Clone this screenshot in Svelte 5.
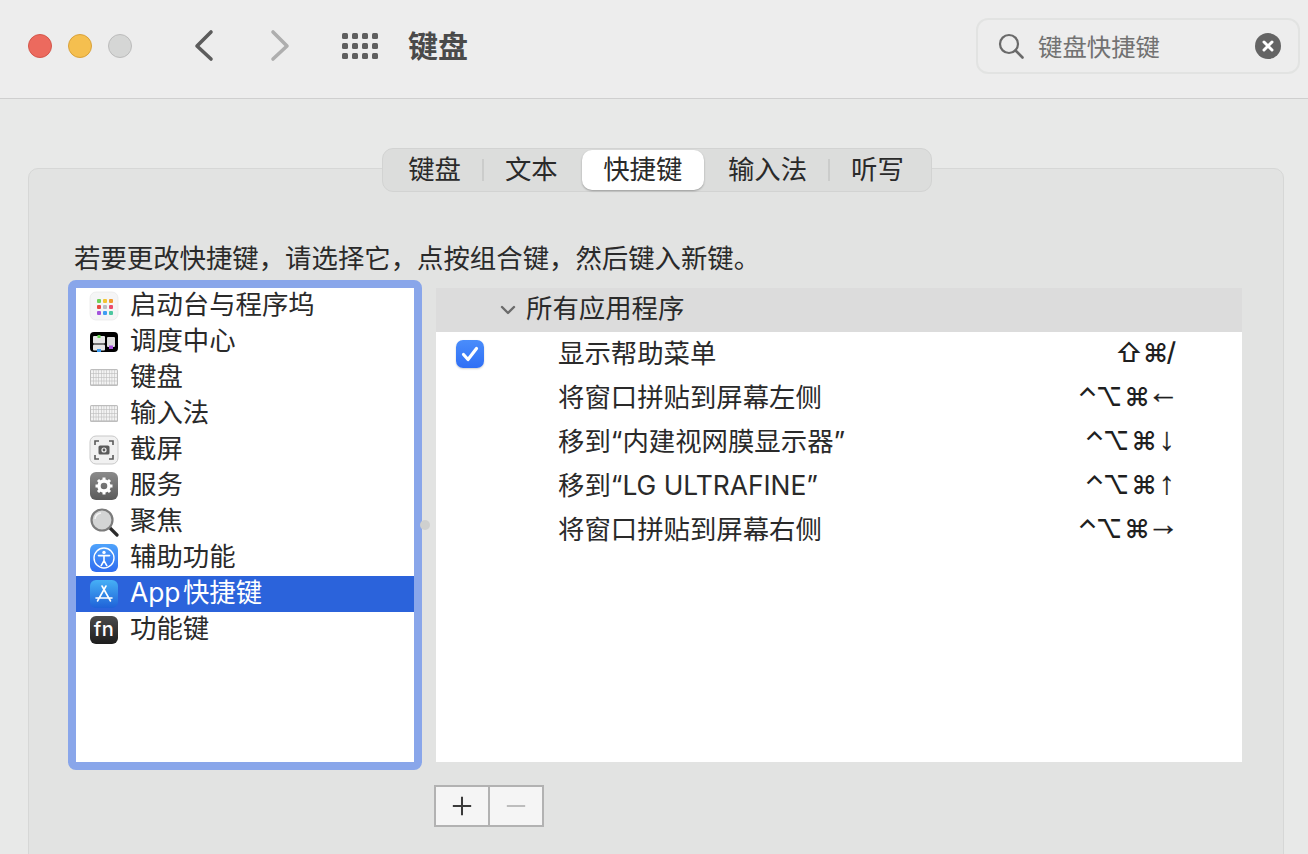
<script>
  const hint = '若要更改快捷键\uFF0C请选择它\uFF0C点按组合键\uFF0C然后键入新键\u3002';
  const tabs = [
    { label: '键盘', cls: 'first sep' },
    { label: '文本', cls: '' },
    { label: '快捷键', cls: 'active' },
    { label: '输入法', cls: 'sep' },
    { label: '听写', cls: 'last' }
  ];
  const categories = [
    { icon: 'launchpad', label: '启动台与程序坞' },
    { icon: 'mission', label: '调度中心' },
    { icon: 'keyboard', label: '键盘' },
    { icon: 'keyboard', label: '输入法' },
    { icon: 'screenshot', label: '截屏' },
    { icon: 'services', label: '服务' },
    { icon: 'spotlight', label: '聚焦' },
    { icon: 'access', label: '辅助功能' },
    { icon: 'appstore', label: 'App 快捷键', selected: true },
    { icon: 'fn', label: '功能键' }
  ];
  const shortcuts = [
    { checked: true, label: '显示帮助菜单', keys: ['⇧', '⌘', '/'] },
    { label: '将窗口拼贴到屏幕左侧', keys: ['⌃', '⌥', '⌘', '←'] },
    { label: '移到“内建视网膜显示器”', keys: ['⌃', '⌥', '⌘', '↓'] },
    { label: '移到“LG ULTRAFINE”', keys: ['⌃', '⌥', '⌘', '↑'] },
    { label: '将窗口拼贴到屏幕右侧', keys: ['⌃', '⌥', '⌘', '→'] }
  ];
  const launchColors = ['#6fd05a', '#f3c431', '#ef9a2e', '#e8483f', '#b9bdc2', '#ec4a6c', '#a455dc', '#3e9df2', '#4cc7a0'];
  const keyRows = [0, 1, 2, 3];
  const keyCols = [0, 1, 2, 3, 4, 5, 6, 7, 8, 9];
</script>

{#snippet icon(name)}
  <svg class="cat-icon" viewBox="0 0 30 30" aria-hidden="true">
    <defs>
      <linearGradient id="g-gray" x1="0" y1="0" x2="0" y2="1"><stop offset="0" stop-color="#8b8b8b"/><stop offset="1" stop-color="#5a5a5a"/></linearGradient>
      <linearGradient id="g-blue" x1="0" y1="0" x2="0" y2="1"><stop offset="0" stop-color="#4fa3fb"/><stop offset="1" stop-color="#2f6cf0"/></linearGradient>
      <linearGradient id="g-store" x1="0" y1="0" x2="0" y2="1"><stop offset="0" stop-color="#46b0f6"/><stop offset="1" stop-color="#1f62d8"/></linearGradient>
      <linearGradient id="g-dark" x1="0" y1="0" x2="0" y2="1"><stop offset="0" stop-color="#4b4b4b"/><stop offset="1" stop-color="#1d1d1d"/></linearGradient>
    </defs>
    {#if name === 'launchpad'}
      <rect x="1" y="1" width="28" height="28" rx="6" fill="#f5f5f6" stroke="#e4e4e4" stroke-width="0.6"/>
      {#each launchColors as c, i}
        <rect x={8 + (i % 3) * 6} y={8 + Math.floor(i / 3) * 6} width="4" height="4" rx="1" fill={c}/>
      {/each}
    {:else if name === 'mission'}
      <rect x="1" y="5" width="28" height="20" rx="4" fill="#000"/>
      <rect x="4" y="9" width="12" height="7.5" rx="1" fill="#e6e6e6"/>
      <rect x="8.5" y="8" width="3" height="3" fill="#63d24e"/>
      <rect x="18" y="10" width="8" height="10" rx="1" fill="#dcdcdc"/>
      <rect x="20" y="18.5" width="4" height="3.5" fill="#a550dc"/>
      <rect x="4" y="17.5" width="12" height="6" rx="1" fill="#e6e6e6"/>
      <rect x="8" y="22" width="4" height="3" fill="#3c9df2"/>
    {:else if name === 'keyboard'}
      <rect x="1" y="6" width="28" height="17" rx="1.5" fill="#bdbdbd"/>
      {#each keyRows as r}
        {#each keyCols as c}
          <rect x={2 + c * 2.65} y={7.2 + r * 3.7} width="2.1" height="3.1" fill="#f3f3f3"/>
        {/each}
      {/each}
    {:else if name === 'screenshot'}
      <rect x="1" y="1" width="28" height="28" rx="6" fill="#f1f1f1" stroke="#c9c9c9"/>
      <path d="M6 10V6h4M20 6h4v4M24 20v4h-4M10 24H6v-4" fill="none" stroke="#5b5b5b" stroke-width="1.6"/>
      <rect x="9.5" y="10.5" width="11" height="9" rx="1.6" fill="#5b5b5b"/>
      <circle cx="15" cy="15" r="2.6" fill="#f1f1f1"/>
      <circle cx="15" cy="15" r="1.4" fill="#5b5b5b"/>
    {:else if name === 'services'}
      <rect x="1" y="1" width="28" height="28" rx="6" fill="url(#g-gray)"/>
      <circle cx="15" cy="15" r="5" fill="none" stroke="#fff" stroke-width="3.4"/>
      <path d="M15 6.5v4M15 19.5v4M6.5 15h4M19.5 15h4M9 9l2.8 2.8M18.2 18.2L21 21M21 9l-2.8 2.8M11.8 18.2L9 21" stroke="#fff" stroke-width="3"/>
    {:else if name === 'spotlight'}
      <line x1="20" y1="20" x2="28" y2="28" stroke="#2b2b2b" stroke-width="3.2" stroke-linecap="round"/>
      <circle cx="13" cy="13" r="10.5" fill="#d3d4d4" stroke="#7b7b7b" stroke-width="2.2"/>
      <path d="M6 12a7 7 0 0 1 6-6" fill="none" stroke="#f4f4f4" stroke-width="1.4"/>
    {:else if name === 'access'}
      <rect x="1" y="1" width="28" height="28" rx="6" fill="url(#g-blue)"/>
      <circle cx="15" cy="15" r="10" fill="none" stroke="#fff" stroke-width="1.4"/>
      <circle cx="15" cy="9.4" r="1.7" fill="#fff"/>
      <path d="M9.5 12.6h11M15 12.6v5M15 17.6l-2.8 5M15 17.6l2.8 5" fill="none" stroke="#fff" stroke-width="1.6" stroke-linecap="round"/>
    {:else if name === 'appstore'}
      <rect x="1" y="1" width="28" height="28" rx="6" fill="url(#g-store)"/>
      <path d="M13 7l8.5 15M17 7L8.5 22M7 19h16" fill="none" stroke="#fff" stroke-width="1.6" stroke-linecap="round"/>
    {:else if name === 'fn'}
      <rect x="1" y="1" width="28" height="28" rx="6" fill="url(#g-dark)"/>
    {/if}
  </svg>
{/snippet}

<div class="window">
  <header class="toolbar">
    <div class="lights">
      <span class="light red"></span>
      <span class="light yellow"></span>
      <span class="light gray"></span>
    </div>
    <div class="nav">
      <svg class="chev" viewBox="0 0 24 34"><path d="M19 3L5 17l14 13" fill="none" stroke="#5c5c5c" stroke-width="3.6" stroke-linecap="round" stroke-linejoin="round"/></svg>
      <svg class="chev" viewBox="0 0 24 34"><path d="M5 3l14 14L5 30" fill="none" stroke="#aeaeae" stroke-width="3.6" stroke-linecap="round" stroke-linejoin="round"/></svg>
    </div>
    <div class="grid-btn">
      {#each Array(12) as _}<span></span>{/each}
    </div>
    <h1>键盘</h1>
    <div class="search">
      <svg class="mag" viewBox="0 0 26 26"><circle cx="11" cy="11" r="9" fill="none" stroke="#6a6a6a" stroke-width="2.2"/><path d="M17.5 17.5l7 7" stroke="#6a6a6a" stroke-width="2.6" stroke-linecap="round"/></svg>
      <span class="search-text">键盘快捷键</span>
      <span class="clear"><svg viewBox="0 0 26 26"><path d="M9 9l8 8M17 9l-8 8" stroke="#fff" stroke-width="3" stroke-linecap="round"/></svg></span>
    </div>
  </header>

  <main class="content">
    <section class="panel">
      <nav class="tabs">
        {#each tabs as t}
          <span class="tab {t.cls}"><span class="tab-text">{t.label}</span></span>
        {/each}
      </nav>
      <p class="hint">{hint}</p>
      <div class="columns">
        <div class="list-wrap">
          <ul class="cats">
            {#each categories as c}
              <li class:selected={c.selected}>
                <span class="icon-box">
                  {@render icon(c.icon)}
                  {#if c.icon === 'fn'}<span class="fn-label">fn</span>{/if}
                </span>
                <span class="txt">{c.label}</span>
              </li>
            {/each}
          </ul>
        </div>
        <div class="splitter"><span></span></div>
        <div class="right">
          <div class="table">
            <div class="group">
              <svg class="caret" viewBox="0 0 16 10"><path d="M2 2l6 6 6-6" fill="none" stroke="#6b6b6b" stroke-width="2.4" stroke-linecap="round" stroke-linejoin="round"/></svg>
              <span class="txt">所有应用程序</span>
            </div>
            {#each shortcuts as s}
              <div class="row">
                <span class="check-col">
                  {#if s.checked}
                    <span class="check"><svg viewBox="0 0 28 28"><path d="M7.5 14.5l4.5 5 8.5-11" fill="none" stroke="#fff" stroke-width="3.2" stroke-linecap="round" stroke-linejoin="round"/></svg></span>
                  {/if}
                </span>
                <span class="name">{s.label}</span>
                <span class="keys">
                  {#each s.keys as k}
                    <span class="key" class:ctrl={k === '⌃'} class:cmd={k === '⌘'} class:shift={k === '⇧'} class:slash={k === '/'} class:arrow-h={k === '←' || k === '→'} class:arrow-v={k === '↓' || k === '↑'}>{k}</span>
                  {/each}
                </span>
              </div>
            {/each}
          </div>
          <div class="buttons">
            <span class="btn"><svg viewBox="0 0 24 24"><path d="M12 2v20M2 12h20" stroke="#3a3a3a" stroke-width="2.2"/></svg></span>
            <span class="btn"><svg viewBox="0 0 24 24"><path d="M2 12h20" stroke="#bdbdbd" stroke-width="2.2"/></svg></span>
          </div>
        </div>
      </div>
    </section>
  </main>
</div>

<style>
  :global(body) {
    margin: 0;
    background: #e8e9e8;
  }
  .window {
    width: 1308px;
    height: 854px;
    overflow: hidden;
    display: flex;
    flex-direction: column;
    font-family: Inter, "Noto Sans CJK SC", sans-serif;
    font-size: 26.4px;
    color: #2a2a2a;
    background: #e8e9e8;
  }
  .txt {
    padding-bottom: 8px;
  }
  .toolbar {
    flex: 0 0 98px;
    height: 98px;
    border-bottom: 1px solid #cfcfcf;
    background: #ededed;
    display: flex;
    align-items: center;
  }
  .lights {
    display: flex;
    gap: 16px;
    margin-left: 28px;
    margin-top: -6px;
  }
  .light {
    width: 24px;
    height: 24px;
    border-radius: 50%;
    box-sizing: border-box;
    border: 1px solid;
  }
  .red { background: #ec6a5e; border-color: #d4564b; }
  .yellow { background: #f5bf4f; border-color: #d9a23a; }
  .gray { background: #d5d6d5; border-color: #bcbcbc; }
  .nav {
    display: flex;
    gap: 52px;
    margin-left: 60px;
    margin-top: -6px;
  }
  .chev { width: 24px; height: 34px; display: block; }
  .grid-btn {
    display: grid;
    grid-template-columns: repeat(4, 6px);
    grid-auto-rows: 6px;
    gap: 4px 4px;
    margin-left: 50px;
    margin-top: -6px;
  }
  .grid-btn span { background: #5f5f5f; border-radius: 1.5px; }
  h1 {
    margin: -10px 0 0 30px;
    font-size: 30px;
    line-height: 1;
    font-weight: 700;
    color: #4a4a4a;
    font-family: "Noto Sans CJK SC", sans-serif;
  }
  .search {
    margin-left: auto;
    margin-right: 8px;
    margin-top: -7px;
    width: 324px;
    height: 56px;
    box-sizing: border-box;
    border: 2px solid #e2e3e2;
    border-radius: 12px;
    display: flex;
    align-items: center;
    padding: 0 17px 0 20px;
  }
  .mag { width: 26px; height: 26px; }
  .search-text {
    margin-left: 14px;
    font-size: 24.4px;
    color: #727272;
    flex: 1;
  }
  .clear {
    width: 26px;
    height: 26px;
    border-radius: 50%;
    background: #646464;
    display: block;
  }
  .clear svg { display: block; }
  .content {
    flex: 1;
    min-height: 0;
    padding: 69px 24px 0 28px;
  }
  .panel {
    height: 700px;
    box-sizing: border-box;
    background: #e2e3e2;
    border: 1px solid #d6d7d6;
    border-radius: 10px;
    padding: 0 41px 0 39px;
  }
  .tabs {
    display: flex;
    width: fit-content;
    margin: -21px auto 0;
    height: 44px;
    box-sizing: border-box;
    padding: 1px;
    background: #dcdddc;
    border: 1px solid #d2d3d2;
    border-radius: 11px;
    align-items: stretch;
    position: relative;
    left: 2px;
  }
  .tab {
    display: flex;
    align-items: center;
    padding: 0 22px;
    line-height: 1;
    position: relative;
    color: #2a2a2a;
    white-space: nowrap;
  }
  .tab-text { padding-bottom: 2px; }
  .tab.first { padding-left: 24px; }
  .tab.last { padding-right: 26px; }
  .tab.sep::after {
    content: "";
    position: absolute;
    right: -1px;
    top: 9px;
    bottom: 9px;
    width: 2px;
    background: #cbcccb;
  }
  .tab.active {
    padding: 0 21.5px;
    margin: 0 2px;
    background: #fff;
    border-radius: 10px;
    box-shadow: 0 1px 2px rgba(0,0,0,.3);
  }
  .hint {
    margin: 48px 0 0 6px;
    height: 40px;
    line-height: 36px;
    white-space: nowrap;
  }
  .columns { display: flex; }
  .list-wrap {
    width: 354px;
    height: 490px;
    box-sizing: border-box;
    border: 8px solid #89a6ea;
    border-radius: 8px;
    background: #fff;
    flex: none;
  }
  .cats { list-style: none; margin: 0; padding: 0; }
  .cats li {
    height: 36px;
    display: flex;
    align-items: center;
    gap: 12px;
    padding-left: 14px;
    white-space: nowrap;
    word-spacing: -5px;
  }
  .cats li.selected {
    background: #2b63db;
    color: #fff;
  }
  .icon-box {
    position: relative;
    width: 28px;
    height: 28px;
    flex: none;
    display: block;
  }
  .cat-icon { width: 30px; height: 30px; display: block; margin: -1px; }
  .fn-label {
    position: absolute;
    inset: 0;
    color: #fff;
    font: 500 20px/26px Inter, sans-serif;
    text-align: center;
    letter-spacing: .5px;
  }
  .splitter {
    width: 14px;
    display: flex;
    align-items: center;
    flex: none;
    height: 490px;
  }
  .splitter span {
    width: 10px;
    height: 10px;
    margin: 0 0 0 -2px;
    border-radius: 50%;
    background: #cfd0cf;
  }
  .right {
    padding-top: 8px;
    width: 806px;
    flex: none;
  }
  .table {
    height: 474px;
    background: #fff;
  }
  .group {
    height: 44px;
    background: #dcdcdc;
    display: flex;
    align-items: center;
    padding-left: 64px;
    gap: 10px;
  }
  .caret { width: 16px; height: 10px; }
  .row {
    height: 44px;
    display: flex;
    align-items: center;
    white-space: nowrap;
  }
  .check-col {
    width: 122px;
    padding-left: 20px;
    box-sizing: border-box;
    flex: none;
  }
  .check {
    display: block;
    width: 28px;
    height: 28px;
    border-radius: 7px;
    background: linear-gradient(#4a8dfb, #2f6ff5);
    box-shadow: 0 1px 2px rgba(0,0,0,.2);
  }
  .check svg { display: block; }
  .name { flex: 1; padding-bottom: 6px; }
  .keys {
    display: flex;
    align-items: center;
    gap: 2px;
    margin-right: 66px;
    padding-bottom: 3px;
    font-family: Inter, "DejaVu Sans", sans-serif;
    font-size: 26px;
    font-weight: 500;
    color: #1f1f1f;
  }
  .key.ctrl { margin-right: -4px; }
  .key.cmd { letter-spacing: -3px; }
  .key.shift { margin-right: -2px; }
  .key.slash { margin-left: -1px; margin-top: -2px; }
  .key.arrow-h,
  .key.arrow-v {
    font-family: "Liberation Sans", sans-serif;
    font-weight: 400;
    font-size: 32px;
    line-height: 1;
    -webkit-text-stroke: 0.3px #1f1f1f;
  }
  .key.arrow-h { margin: -9px -3px 0 -2px; }
  .key.arrow-v { margin: -4px 1px 0 3px; }
  .buttons {
    display: flex;
    margin: 23px 0 0 -2px;
    width: fit-content;
    border: 2px solid #b2b2b2;
  }
  .btn {
    width: 52px;
    height: 38px;
    background: #f5f5f5;
    display: flex;
    align-items: center;
    justify-content: center;
  }
  .btn + .btn { border-left: 2px solid #b2b2b2; }
  .btn svg { width: 22px; height: 22px; }
</style>
